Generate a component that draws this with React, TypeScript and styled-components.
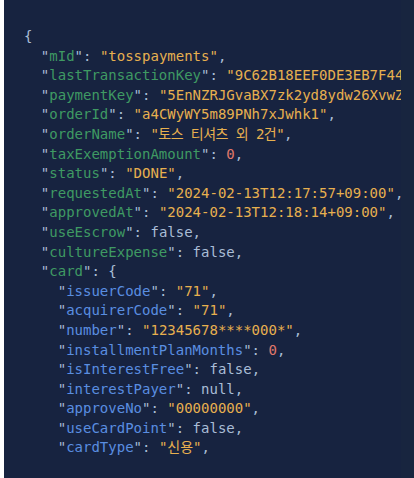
import React from "react";
import styled, { createGlobalStyle } from "styled-components";

const Global = createGlobalStyle`
  html, body { margin: 0; padding: 0; background: #ffffff; }
  body { width: 414px; height: 478px; overflow: hidden; }
`;

const Page = styled.div`
  width: 414px;
  height: 478px;
  padding-left: 4px;
  box-sizing: border-box;
  display: flex;
`;

const Panel = styled.div`
  flex: 1;
  display: flex;
  background: #172340;
  overflow: hidden;
`;

const Scroller = styled.div`
  width: 397px;
  height: 467px;
  overflow: hidden;
  flex-shrink: 0;
`;

const Gutter = styled.div`
  flex: 1;
  background: #18253f;
`;

const Code = styled.pre`
  margin: 0;
  padding: 27px 0 0 20px;
  font-family: "DejaVu Sans Mono", "Noto Sans CJK KR", monospace;
  font-size: 14px;
  line-height: 19.6px;
  color: #a9bdd6;
  white-space: pre;
`;

type Tone = "punc" | "key" | "nkey" | "str" | "num" | "kw";

const colors: Record<Tone, string> = {
  punc: "#a9bdd6",
  key: "#3f9a63",
  nkey: "#5a8ee0",
  str: "#e7b04f",
  num: "#e0786b",
  kw: "#a9bdd6",
};

const Tok = styled.span<{ $t: Tone; $tight?: boolean }>`
  color: ${(p) => colors[p.$t]};
  letter-spacing: ${(p) => (p.$tight ? "-0.55px" : "normal")};
`;

type Val = { t: Tone; v: string; tight?: boolean };
type Line = { indent: number; key?: string; nested?: boolean; val?: Val; raw?: string; comma?: boolean };

const lines: Line[] = [
  { indent: 0, raw: "{" },
  { indent: 1, key: "mId", val: { t: "str", v: '"tosspayments"' }, comma: true },
  { indent: 1, key: "lastTransactionKey", val: { t: "str", v: '"9C62B18EEF0DE3EB7F44BEB5C8A1F3A40"' }, comma: true },
  { indent: 1, key: "paymentKey", val: { t: "str", v: '"5EnNZRJGvaBX7zk2yd8ydw26XvwZkLrqRvxWYP"' }, comma: true },
  { indent: 1, key: "orderId", val: { t: "str", v: '"a4CWyWY5m89PNh7xJwhk1"' }, comma: true },
  { indent: 1, key: "orderName", val: { t: "str", v: '"토스 티셔츠 외 2건"', tight: true }, comma: true },
  { indent: 1, key: "taxExemptionAmount", val: { t: "num", v: "0" }, comma: true },
  { indent: 1, key: "status", val: { t: "str", v: '"DONE"' }, comma: true },
  { indent: 1, key: "requestedAt", val: { t: "str", v: '"2024-02-13T12:17:57+09:00"' }, comma: true },
  { indent: 1, key: "approvedAt", val: { t: "str", v: '"2024-02-13T12:18:14+09:00"' }, comma: true },
  { indent: 1, key: "useEscrow", val: { t: "kw", v: "false" }, comma: true },
  { indent: 1, key: "cultureExpense", val: { t: "kw", v: "false" }, comma: true },
  { indent: 1, key: "card", val: { t: "punc", v: "{" } },
  { indent: 2, nested: true, key: "issuerCode", val: { t: "str", v: '"71"' }, comma: true },
  { indent: 2, nested: true, key: "acquirerCode", val: { t: "str", v: '"71"' }, comma: true },
  { indent: 2, nested: true, key: "number", val: { t: "str", v: '"12345678****000*"' }, comma: true },
  { indent: 2, nested: true, key: "installmentPlanMonths", val: { t: "num", v: "0" }, comma: true },
  { indent: 2, nested: true, key: "isInterestFree", val: { t: "kw", v: "false" }, comma: true },
  { indent: 2, nested: true, key: "interestPayer", val: { t: "kw", v: "null" }, comma: true },
  { indent: 2, nested: true, key: "approveNo", val: { t: "str", v: '"00000000"' }, comma: true },
  { indent: 2, nested: true, key: "useCardPoint", val: { t: "kw", v: "false" }, comma: true },
  { indent: 2, nested: true, key: "cardType", val: { t: "str", v: '"신용"' }, comma: true },
];

export default function App() {
  return (
    <>
      <Global />
      <Page>
        <Panel>
          <Scroller>
            <Code>
              {lines.map((l, i) => (
                <React.Fragment key={i}>
                  {"  ".repeat(l.indent)}
                  {l.raw !== undefined ? (
                    <Tok $t="punc">{l.raw}</Tok>
                  ) : (
                    <>
                      <Tok $t="punc">"</Tok>
                      <Tok $t={l.nested ? "nkey" : "key"}>{l.key}</Tok>
                      <Tok $t="punc">"</Tok>
                      <Tok $t="punc">: </Tok>
                      {l.val && (
                        <Tok $t={l.val.t} $tight={l.val.tight}>
                          {l.val.v}
                        </Tok>
                      )}
                      {l.comma && <Tok $t="punc">,</Tok>}
                    </>
                  )}
                  {"\n"}
                </React.Fragment>
              ))}
            </Code>
          </Scroller>
          <Gutter />
        </Panel>
      </Page>
    </>
  );
}
